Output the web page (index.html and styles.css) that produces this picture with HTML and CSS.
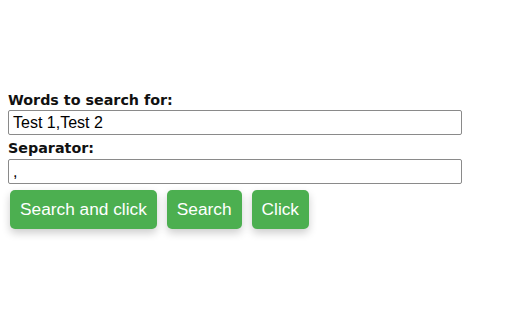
FILE: index.html
```html
<!DOCTYPE html>
<html>
<head>
<meta charset="utf-8">
<link rel="stylesheet" href="styles.css">
</head>
<body>
<div class="panel">
  <label class="label" for="words">Words to search for:</label>
  <input class="field" id="words" type="text" value="Test 1,Test 2">
  <label class="label second" for="sep">Separator:</label>
  <input class="field" id="sep" type="text" value=",">
  <div class="actions">
    <button class="btn">Search and click</button>
    <button class="btn">Search</button>
    <button class="btn">Click</button>
  </div>
</div>
</body>
</html>
```
FILE: styles.css
```css
html, body {
  margin: 0;
  padding: 0;
  background: #ffffff;
}
body {
  height: 320px;
  display: flex;
  flex-direction: column;
  justify-content: center;
  padding: 1px 8px 0;
  box-sizing: border-box;
}
.panel {
  display: flex;
  flex-direction: column;
  align-items: flex-start;
}
.label {
  font-family: "DejaVu Sans", Verdana, sans-serif;
  font-weight: bold;
  font-size: 14.3px;
  line-height: 17px;
  color: #111;
  margin-bottom: 1px;
}
.label.second {
  margin-top: 5px;
  margin-bottom: 2px;
}
.field {
  box-sizing: border-box;
  width: 454px;
  height: 25px;
  margin: 0;
  padding: 1px 4px;
  border: 1px solid #8a8a8a;
  border-radius: 2px;
  font-family: "Liberation Sans", Arial, sans-serif;
  font-size: 16px;
  color: #000;
  background: #fff;
  outline: none;
}
.actions {
  display: flex;
  gap: 10px;
  margin-top: 6px;
  padding-left: 2px;
}
.btn {
  background: #4caf50;
  color: #fff;
  border: none;
  border-radius: 5px;
  padding: 10px 10px;
  font-family: "Liberation Sans", Arial, sans-serif;
  font-size: 17.3px;
  line-height: 19px;
  box-shadow: 0 4px 8px rgba(0, 0, 0, 0.2);
  cursor: pointer;
}
```
